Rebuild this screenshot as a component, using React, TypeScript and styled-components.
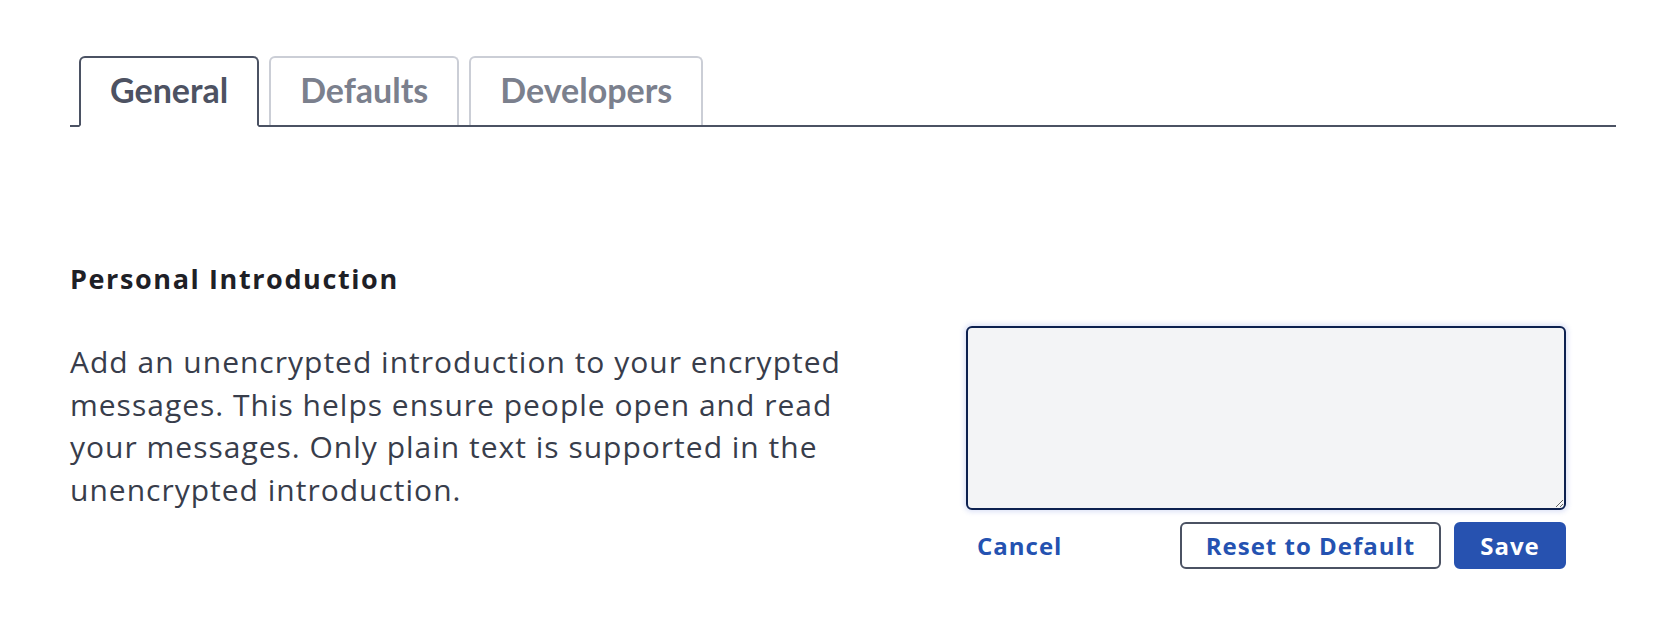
import React from "react";
import styled, { createGlobalStyle } from "styled-components";

const GlobalStyle = createGlobalStyle`
  html, body {
    margin: 0;
    padding: 0;
    background: #ffffff;
  }
  body {
    font-family: "Open Sans", "Noto Sans", sans-serif;
  }
`;

const Page = styled.div`
  width: 1546px;
  padding: 56px 0 0 70px;
  box-sizing: content-box;
`;

const TabList = styled.div`
  display: flex;
  gap: 10px;
  padding-left: 9px;
  border-bottom: 2px solid #4b5263;
`;

const Tab = styled.button<{ $active?: boolean }>`
  font-family: Lato, "Open Sans", sans-serif;
  font-weight: 700;
  font-size: 34px;
  line-height: 40px;
  padding: 12px 29px 15px;
  margin-bottom: ${(p) => (p.$active ? "-2px" : "0")};
  background: #ffffff;
  color: ${(p) => (p.$active ? "#4d5262" : "#7b808d")};
  border: 2px solid ${(p) => (p.$active ? "#4b5263" : "#cbced6")};
  border-bottom: ${(p) => (p.$active ? "2px solid #ffffff" : "none")};
  border-radius: 6px 6px 0 0;
  cursor: pointer;
`;

const Section = styled.section`
  padding-top: 137px;
  padding-right: 50px;
`;

const Heading = styled.h2`
  margin: 0;
  font-family: "Open Sans", Lato, sans-serif;
  font-weight: 700;
  font-size: 27px;
  line-height: 30px;
  letter-spacing: 1.6px;
  color: #1e2026;
`;

const Row = styled.div`
  display: flex;
  justify-content: space-between;
  align-items: flex-start;
  margin-top: 32px;
`;

const Description = styled.p`
  margin: 15px 0 0;
  width: 800px;
  font-size: 30px;
  line-height: 42.5px;
  letter-spacing: 1px;
  color: #383d4b;
`;

const Editor = styled.div`
  width: 600px;
  display: flex;
  flex-direction: column;
  gap: 12px;
`;

const TextArea = styled.textarea`
  box-sizing: border-box;
  width: 100%;
  height: 184px;
  margin: 0;
  display: block;
  background: #f3f4f6;
  border: 2px solid #0d2150;
  border-radius: 6px;
  box-shadow: 0 0 5px 2px rgba(70, 100, 210, 0.18);
  outline: none;
  font-family: "Open Sans", sans-serif;
  font-size: 20px;
  padding: 10px;
`;

const Actions = styled.div`
  display: flex;
  align-items: center;
  gap: 13px;
`;

const Spacer = styled.div`
  flex: 1;
`;

const Button = styled.button<{ $variant: "link" | "outline" | "primary" }>`
  box-sizing: border-box;
  height: 47px;
  font-family: "Open Sans", sans-serif;
  font-weight: 700;
  font-size: 24px;
  line-height: 30px;
  letter-spacing: 1px;
  border-radius: 6px;
  cursor: pointer;
  padding: ${(p) => (p.$variant === "link" ? "0 11px" : "0 16px")};
  background: ${(p) => (p.$variant === "primary" ? "#2752b0" : "transparent")};
  color: ${(p) => (p.$variant === "primary" ? "#ffffff" : "#2452b1")};
  border: ${(p) =>
    p.$variant === "outline"
      ? "2px solid #4b5263"
      : p.$variant === "primary"
      ? "2px solid #2752b0"
      : "none"};
  width: ${(p) =>
    p.$variant === "outline" ? "261px" : p.$variant === "primary" ? "112px" : "auto"};
`;

export default function App() {
  return (
    <>
      <GlobalStyle />
      <Page>
        <TabList>
          <Tab $active>General</Tab>
          <Tab>Defaults</Tab>
          <Tab>Developers</Tab>
        </TabList>
        <Section>
          <Heading>Personal Introduction</Heading>
          <Row>
            <Description>
              Add an unencrypted introduction to your encrypted messages. This
              helps ensure people open and read your messages. Only plain text
              is supported in the unencrypted introduction.
            </Description>
            <Editor>
              <TextArea />
              <Actions>
                <Button $variant="link">Cancel</Button>
                <Spacer />
                <Button $variant="outline">Reset to Default</Button>
                <Button $variant="primary">Save</Button>
              </Actions>
            </Editor>
          </Row>
        </Section>
      </Page>
    </>
  );
}
